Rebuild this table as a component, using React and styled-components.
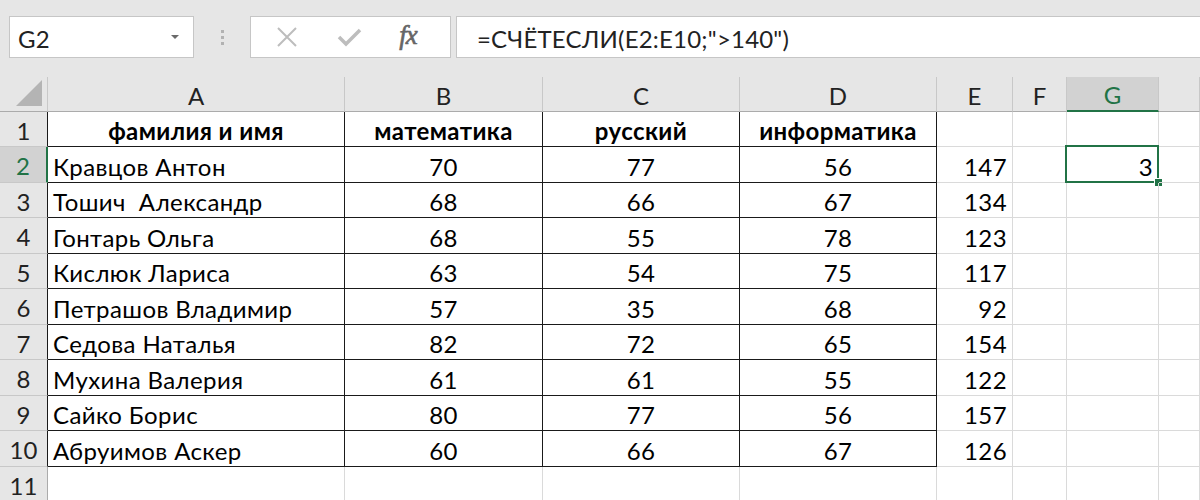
import React from "react";
import styled, { createGlobalStyle, css } from "styled-components";

const GlobalStyle = createGlobalStyle`
  html, body { margin: 0; padding: 0; background: #e6e6e6; overflow: hidden; }
  * { box-sizing: border-box; }
`;

const FONT = `Lato, "Open Sans", "Liberation Sans", sans-serif`;
const GREEN = "#217346";

const Page = styled.div`
  width: 1200px;
  height: 500px;
  overflow: hidden;
  display: flex;
  flex-direction: column;
  font-family: ${FONT};
  color: #000;
`;

const Toolbar = styled.div`
  height: 77px;
  flex: none;
  display: flex;
  align-items: flex-start;
  padding: 16px 0 0 9px;
  background: #e6e6e6;
`;

const NameBox = styled.div`
  width: 185px;
  height: 42px;
  background: #fff;
  border: 1px solid #c6c6c6;
  display: flex;
  align-items: center;
  justify-content: space-between;
  padding: 2px 14px 0 8px;
  font-size: 24px;
  letter-spacing: 0.3px;
  color: #222;
`;

const DropArrow = styled.span`
  width: 0;
  height: 0;
  border-left: 4px solid transparent;
  border-right: 4px solid transparent;
  border-top: 4px solid #6a6a6a;
  margin-top: -2px;
`;

const Grip = styled.div`
  width: 56px;
  height: 42px;
  display: flex;
  flex-direction: column;
  align-items: center;
  justify-content: center;
  gap: 3px;
`;

const GripDot = styled.span`
  width: 3px;
  height: 3px;
  background: #b2b2b2;
`;

const ButtonBox = styled.div`
  width: 201px;
  height: 42px;
  background: #fff;
  border: 1px solid #c6c6c6;
  display: flex;
  align-items: center;
  padding-left: 22px;
`;

const IconSlot = styled.span`
  width: ${(p) => p.$w}px;
  display: flex;
  align-items: center;
  justify-content: center;
`;

const Fx = styled.span`
  font-family: "Liberation Serif", "DejaVu Serif", serif;
  font-style: italic;
  font-size: 27px;
  color: #666;
  letter-spacing: -1px;
  margin-top: -3px;
  -webkit-text-stroke: 0.6px #666;
`;

const FormulaInput = styled.div`
  flex: 1;
  margin-left: 5px;
  height: 42px;
  background: #fff;
  border: 1px solid #c6c6c6;
  border-right: none;
  display: flex;
  align-items: center;
  padding: 2px 0 0 20px;
  font-size: 24px;
  letter-spacing: 0.2px;
  color: #222;
  white-space: nowrap;
`;

const Sheet = styled.div`
  flex: 1;
  display: grid;
  grid-template-columns: 48px 297px 198px 197px 197px 76px 54px 92px 1fr;
  grid-template-rows: 35px repeat(5, 35px 36px) 40px;
  background: #fff;
`;

const HeaderBase = css`
  background: #e6e6e6;
  display: flex;
  align-items: center;
  justify-content: center;
  font-size: 24px;
  color: #222;
  padding-top: 2px;
`;

const Corner = styled.div`
  ${HeaderBase};
  position: relative;
  border-right: 1px solid #c8c8c8;
  border-bottom: 1px solid #ababab;
`;

const CornerTriangle = styled.span`
  position: absolute;
  right: 5px;
  bottom: 5px;
  width: 0;
  height: 0;
  border-left: 26px solid transparent;
  border-bottom: 26px solid #b4b4b4;
`;

const ColHead = styled.div`
  ${HeaderBase};
  border-right: 1px solid #c8c8c8;
  border-bottom: ${(p) => (p.$active ? `2px solid ${GREEN}` : "1px solid #ababab")};
  ${(p) =>
    p.$active &&
    css`
      background: #d2d2d2;
      color: ${GREEN};
    `}
`;

const RowHead = styled.div`
  ${HeaderBase};
  align-items: ${(p) => (p.$partial ? "flex-start" : "center")};
  padding-top: ${(p) => (p.$partial ? "4px" : "2px")};
  border-bottom: 1px solid #c8c8c8;
  border-right: ${(p) =>
    p.$active ? `2px solid ${GREEN}` : p.$boxed ? "1px solid #1a1a1a" : "1px solid #ababab"};
  ${(p) =>
    p.$active &&
    css`
      background: #d2d2d2;
      color: ${GREEN};
    `}
`;

const Cell = styled.div`
  position: relative;
  display: flex;
  align-items: center;
  padding: 3px 5px 0 5px;
  font-size: 24px;
  letter-spacing: 0.4px;
  white-space: pre;
  border-right: 1px solid ${(p) => (p.$boxed ? "#1a1a1a" : "#dadada")};
  border-bottom: 1px solid ${(p) => (p.$boxed ? "#1a1a1a" : "#dadada")};
  justify-content: ${(p) =>
    p.$align === "center" ? "center" : p.$align === "right" ? "flex-end" : "flex-start"};
  font-weight: ${(p) => (p.$bold ? 700 : 400)};
`;

const Selection = styled.span`
  position: absolute;
  left: -2px;
  top: -2px;
  right: -1px;
  bottom: -1px;
  border: 2px solid ${GREEN};
  pointer-events: none;
`;

const Handle = styled.span`
  position: absolute;
  right: -4px;
  bottom: -4px;
  width: 7px;
  height: 7px;
  background: ${GREEN};
  outline: 1px solid #fff;
`;

const columns = ["A", "B", "C", "D", "E", "F", "G", ""];

const data = [
  ["Кравцов Антон", 70, 77, 56, 147],
  ["Тошич  Александр", 68, 66, 67, 134],
  ["Гонтарь Ольга", 68, 55, 78, 123],
  ["Кислюк Лариса", 63, 54, 75, 117],
  ["Петрашов Владимир", 57, 35, 68, 92],
  ["Седова Наталья", 82, 72, 65, 154],
  ["Мухина Валерия", 61, 61, 55, 122],
  ["Сайко Борис", 80, 77, 56, 157],
  ["Абруимов Аскер", 60, 66, 67, 126],
];

const XIcon = () => (
  <svg width="24" height="24" viewBox="0 0 24 24">
    <path d="M3 3 L21 21 M21 3 L3 21" stroke="#bdbdbd" strokeWidth="2" fill="none" />
  </svg>
);

const CheckIcon = () => (
  <svg width="26" height="24" viewBox="0 0 26 24">
    <path d="M3 12 L10 19 L24 5" stroke="#bdbdbd" strokeWidth="3.5" fill="none" />
  </svg>
);

export default function App() {
  const rows = [];
  rows.push(
    <React.Fragment key="r1">
      <RowHead $boxed>1</RowHead>
      <Cell $boxed $bold $align="center">фамилия и имя</Cell>
      <Cell $boxed $bold $align="center">математика</Cell>
      <Cell $boxed $bold $align="center">русский</Cell>
      <Cell $boxed $bold $align="center">информатика</Cell>
      <Cell />
      <Cell />
      <Cell />
      <Cell />
    </React.Fragment>
  );
  data.forEach((d, i) => {
    const n = i + 2;
    rows.push(
      <React.Fragment key={n}>
        <RowHead $boxed $active={n === 2}>{n}</RowHead>
        <Cell $boxed>{d[0]}</Cell>
        <Cell $boxed $align="center">{d[1]}</Cell>
        <Cell $boxed $align="center">{d[2]}</Cell>
        <Cell $boxed $align="center">{d[3]}</Cell>
        <Cell $align="right">{d[4]}</Cell>
        <Cell />
        <Cell $align="right">
          {n === 2 && (
            <>
              3
              <Selection />
              <Handle />
            </>
          )}
        </Cell>
        <Cell />
      </React.Fragment>
    );
  });
  rows.push(
    <React.Fragment key="r11">
      <RowHead $partial>11</RowHead>
      <Cell />
      <Cell />
      <Cell />
      <Cell />
      <Cell />
      <Cell />
      <Cell />
      <Cell />
    </React.Fragment>
  );

  return (
    <Page>
      <GlobalStyle />
      <Toolbar>
        <NameBox>
          <span>G2</span>
          <DropArrow />
        </NameBox>
        <Grip>
          <GripDot />
          <GripDot />
          <GripDot />
        </Grip>
        <ButtonBox>
          <IconSlot $w={28}><XIcon /></IconSlot>
          <IconSlot $w={96}><CheckIcon /></IconSlot>
          <IconSlot $w={22}><Fx>fx</Fx></IconSlot>
        </ButtonBox>
        <FormulaInput>=СЧЁТЕСЛИ(E2:E10;"&gt;140")</FormulaInput>
      </Toolbar>
      <Sheet>
        <Corner>
          <CornerTriangle />
        </Corner>
        {columns.map((c, i) => (
          <ColHead key={i} $active={c === "G"}>{c}</ColHead>
        ))}
        {rows}
      </Sheet>
    </Page>
  );
}
